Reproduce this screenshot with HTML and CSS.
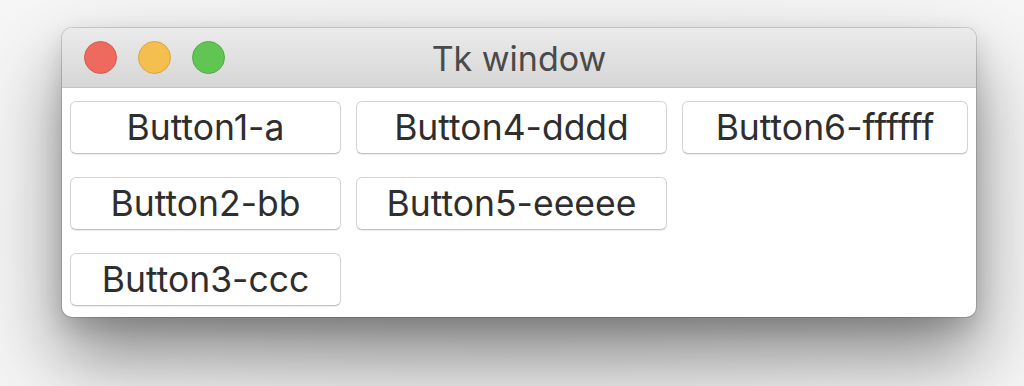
FILE: index.html
```html
<!DOCTYPE html>
<html lang="en">

<head>
  <meta charset="UTF-8">
  <title>Tk window</title>
  <link rel="stylesheet" href="styles.css">
</head>

<body>
  <div class="window">
    <div class="titlebar">
      <div class="lights">
        <span class="light red"></span>
        <span class="light yellow"></span>
        <span class="light green"></span>
      </div>
      <div class="title">Tk window</div>
    </div>
    <div class="content">
      <div class="col col1">
        <button class="btn">Button1-a</button>
        <button class="btn">Button2-bb</button>
        <button class="btn">Button3-ccc</button>
      </div>
      <div class="col col2">
        <button class="btn">Button4-dddd</button>
        <button class="btn">Button5-eeeee</button>
      </div>
      <div class="col col3">
        <button class="btn">Button6-ffffff</button>
      </div>
    </div>
  </div>
</body>

</html>
```
FILE: styles.css
```css
/* page */
html,
body {
  margin: 0;
  height: 100%;
}

body {
  background: radial-gradient(ellipse at 50% 60%, #e2e2e2 0%, #efefef 55%, #f6f6f6 100%);
  font-family: Inter, "Liberation Sans", Arial, sans-serif;
  padding: 28px 0 0 62px;
  box-sizing: border-box;
  overflow: hidden;
}

/* window */
.window {
  width: 914px;
  height: 289px;
  background: #fff;
  border-radius: 10px;
  box-shadow:
    0 0 0 1px rgba(0, 0, 0, .14),
    0 40px 70px rgba(0, 0, 0, .42),
    0 10px 24px rgba(0, 0, 0, .14);
  overflow: hidden;
  display: flex;
  flex-direction: column;
}

.titlebar {
  height: 59px;
  flex: none;
  background: linear-gradient(180deg, #ebebeb, #d6d6d6);
  border-bottom: 1px solid #c4c4c4;
  display: flex;
  align-items: center;
  position: relative;
}

.lights {
  display: flex;
  gap: 21px;
  padding-left: 22px;
}

.light {
  width: 33px;
  height: 33px;
  border-radius: 50%;
  box-sizing: border-box;
}

.red {
  background: #ee6a5f;
  border: 1px solid #d85a50;
}

.yellow {
  background: #f5bf4f;
  border: 1px solid #dba43d;
}

.green {
  background: #61c554;
  border: 1px solid #4ead44;
}

.title {
  position: absolute;
  left: 0;
  right: 0;
  text-align: center;
  font-size: 34px;
  color: #4a4a4a;
  top: 10px;
}

/* buttons */
.content {
  display: flex;
  gap: 15px;
  padding: 13px 8px 0;
}

.col {
  display: flex;
  flex-direction: column;
  gap: 23px;
}

.col1 {
  width: 271px;
}

.col2 {
  width: 311px;
}

.col3 {
  width: 286px;
}

.btn {
  height: 53px;
  background: #fff;
  border: 1px solid #d4d4d4;
  border-bottom-color: #c2c2c2;
  border-radius: 6px;
  box-shadow: 0 1px 1px rgba(0, 0, 0, .08);
  font-family: Inter, "Liberation Sans", Arial, sans-serif;
  font-size: 35.5px;
  color: #2e2e2e;
  padding: 0;
}
```
